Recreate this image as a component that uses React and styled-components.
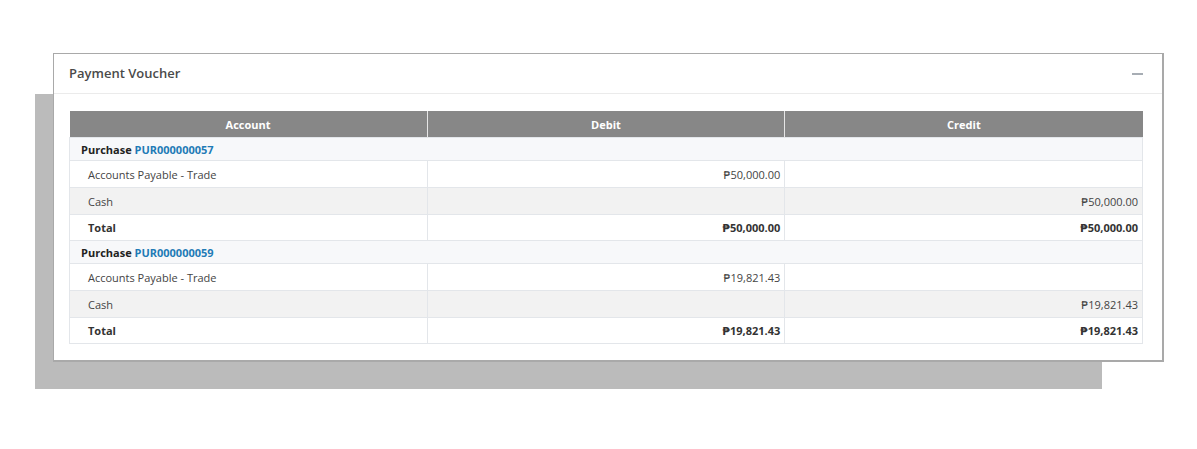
import React from 'react';
import styled, { createGlobalStyle } from 'styled-components';

const GlobalStyle = createGlobalStyle`
  html, body {
    margin: 0;
    padding: 0;
    background: #ffffff;
  }
  body {
    font-family: "Open Sans", "DejaVu Sans", sans-serif;
    color: #333333;
  }
`;

const Page = styled.div`
  position: relative;
  width: 1197px;
  height: 449px;
  padding: 53px 0 0 53px;
  box-sizing: border-box;
`;

// grey slab behind the card
const Backdrop = styled.div`
  position: absolute;
  left: 35px;
  top: 94px;
  width: 1067px;
  height: 295px;
  background: #bbbbbb;
`;

const Card = styled.section`
  position: relative;
  width: 1111px;
  box-sizing: border-box;
  background: #ffffff;
  border: 2px solid #a9a9a9;
  border-left-width: 1px;
  border-top-width: 1px;
  padding-bottom: 16px;
`;

const CardHeader = styled.header`
  display: flex;
  align-items: center;
  justify-content: space-between;
  height: 39px;
  padding: 0 19px 0 15px;
  border-bottom: 1px solid #ebebeb;
`;

const Title = styled.h3`
  margin: 0 0 1px;
  font-size: 13px;
  font-weight: 600;
  color: #4a4a4a;
`;

const Collapse = styled.span`
  display: block;
  width: 11px;
  height: 2px;
  background: #a7adb4;
`;

const CardBody = styled.div`
  padding: 17px 19px 0 15px;
`;

const Table = styled.table`
  width: 100%;
  border-collapse: collapse;
  table-layout: fixed;
  font-size: 11px;
  color: #444444;
`;

const Th = styled.th`
  height: 26px;
  padding: 0;
  background: #878787;
  color: #ffffff;
  font-weight: 700;
  text-align: center;
  border-left: 1px solid #e6e6e6;
  &:first-child {
    border-left: none;
  }
`;

const GroupRow = styled.tr`
  background: #f7f8fa;
  border: 1px solid #e3e6ea;
`;

const GroupCell = styled.td`
  height: 22px;
  padding: 0 0 0 11px;
  font-weight: 700;
  color: #222222;
`;

const Link = styled.a`
  color: #1f7bb6;
  text-decoration: none;
`;

const Row = styled.tr`
  background: ${(p) => (p.$shade ? '#f2f2f2' : '#ffffff')};
  border: 1px solid #e3e6ea;
`;

const Td = styled.td`
  height: ${(p) => (p.$bold ? '25px' : '26px')};
  padding: ${(p) => (p.$amount ? '0 4px 0 0' : '0 0 0 18px')};
  text-align: ${(p) => (p.$amount ? 'right' : 'left')};
  font-weight: ${(p) => (p.$bold ? 700 : 400)};
  color: ${(p) => (p.$bold ? '#333333' : '#444444')};
  border-left: 1px solid #e3e6ea;
`;

const vouchers = [
  { ref: 'PUR000000057', amount: '₱50,000.00' },
  { ref: 'PUR000000059', amount: '₱19,821.43' },
];

function App() {
  return (
    <>
      <GlobalStyle />
      <Page>
        <Backdrop />
        <Card>
          <CardHeader>
            <Title>Payment Voucher</Title>
            <Collapse />
          </CardHeader>
          <CardBody>
            <Table>
              <thead>
                <tr>
                  <Th>Account</Th>
                  <Th>Debit</Th>
                  <Th>Credit</Th>
                </tr>
              </thead>
              <tbody>
                {vouchers.map((v) => (
                  <React.Fragment key={v.ref}>
                    <GroupRow>
                      <GroupCell colSpan={3}>
                        Purchase <Link href="#">{v.ref}</Link>
                      </GroupCell>
                    </GroupRow>
                    <Row>
                      <Td>Accounts Payable - Trade</Td>
                      <Td $amount>{v.amount}</Td>
                      <Td $amount />
                    </Row>
                    <Row $shade>
                      <Td>Cash</Td>
                      <Td $amount />
                      <Td $amount>{v.amount}</Td>
                    </Row>
                    <Row>
                      <Td $bold>Total</Td>
                      <Td $amount $bold>{v.amount}</Td>
                      <Td $amount $bold>{v.amount}</Td>
                    </Row>
                  </React.Fragment>
                ))}
              </tbody>
            </Table>
          </CardBody>
        </Card>
      </Page>
    </>
  );
}

export default App;
